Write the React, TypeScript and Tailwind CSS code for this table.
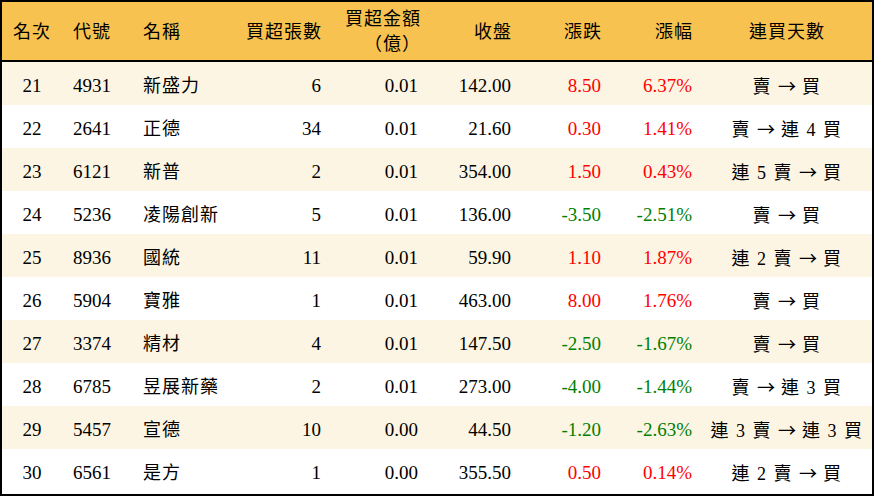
const rows = [
  { rank: 21, code: '4931', name: '新盛力', lots: 6, amount: '0.01', close: '142.00', chg: '8.50', pct: '6.37%', from: '賣', to: '買' },
  { rank: 22, code: '2641', name: '正德', lots: 34, amount: '0.01', close: '21.60', chg: '0.30', pct: '1.41%', from: '賣', to: '連 4 買' },
  { rank: 23, code: '6121', name: '新普', lots: 2, amount: '0.01', close: '354.00', chg: '1.50', pct: '0.43%', from: '連 5 賣', to: '買' },
  { rank: 24, code: '5236', name: '凌陽創新', lots: 5, amount: '0.01', close: '136.00', chg: '-3.50', pct: '-2.51%', from: '賣', to: '買' },
  { rank: 25, code: '8936', name: '國統', lots: 11, amount: '0.01', close: '59.90', chg: '1.10', pct: '1.87%', from: '連 2 賣', to: '買' },
  { rank: 26, code: '5904', name: '寶雅', lots: 1, amount: '0.01', close: '463.00', chg: '8.00', pct: '1.76%', from: '賣', to: '買' },
  { rank: 27, code: '3374', name: '精材', lots: 4, amount: '0.01', close: '147.50', chg: '-2.50', pct: '-1.67%', from: '賣', to: '買' },
  { rank: 28, code: '6785', name: '昱展新藥', lots: 2, amount: '0.01', close: '273.00', chg: '-4.00', pct: '-1.44%', from: '賣', to: '連 3 買' },
  { rank: 29, code: '5457', name: '宣德', lots: 10, amount: '0.00', close: '44.50', chg: '-1.20', pct: '-2.63%', from: '連 3 賣', to: '連 3 買' },
  { rank: 30, code: '6561', name: '是方', lots: 1, amount: '0.00', close: '355.50', chg: '0.50', pct: '0.14%', from: '連 2 賣', to: '買' },
];

// column widths sum to 870 (inner width)
const cols = 'grid grid-cols-[60px_73px_105px_91px_97px_93px_90px_91px_170px] items-center';

const App = () => {
  return (
    <div className="w-[874px] h-[496px] bg-white border-2 border-black font-['Liberation_Serif','Noto_Sans_CJK_TC',serif] text-black">
      {/* Header */}
      <div className={`${cols} h-[60px] pt-[2px] bg-[#f8c250] border-b-2 border-black text-[18px] tracking-[1px] leading-[26px]`}>
        <div className="text-center">名次</div>
        <div className="pl-[11px]">代號</div>
        <div className="pl-[8px]">名稱</div>
        <div className="text-right pr-[9px]">買超張數</div>
        <div className="text-right pr-[7px] leading-[25px]">
          買超金額
          <br />
          （億）
        </div>
        <div className="text-right pr-[9px]">收盤</div>
        <div className="text-right pr-[9px]">漲跌</div>
        <div className="text-right pr-[9px]">漲幅</div>
        <div className="text-center">連買天數</div>
      </div>

      {/* Rows */}
      {rows.map((r, i) => {
        const color = r.chg.startsWith('-') ? 'text-[#008000]' : 'text-[#ff0000]';
        return (
          <div key={r.rank} className={`${cols} h-[43px] pt-[6px] text-[19px] ${i % 2 === 0 ? 'bg-[#fdf5e3]' : 'bg-white'}`}>
            <div className="text-center">{r.rank}</div>
            <div className="pl-[11px]">{r.code}</div>
            <div className="pl-[8px] text-[18px] tracking-[1px]">{r.name}</div>
            <div className="text-right pr-[10px]">{r.lots}</div>
            <div className="text-right pr-[10px]">{r.amount}</div>
            <div className="text-right pr-[10px]">{r.close}</div>
            <div className={`text-right pr-[10px] ${color}`}>{r.chg}</div>
            <div className={`text-right pr-[10px] ${color}`}>{r.pct}</div>
            <div className="text-center text-[18px] whitespace-nowrap tracking-[1.5px]">
              {r.from} <span className="font-['Noto_Sans_CJK_TC',sans-serif] tracking-normal">→</span> {r.to}
            </div>
          </div>
        );
      })}
    </div>
  );
};

export default App;
